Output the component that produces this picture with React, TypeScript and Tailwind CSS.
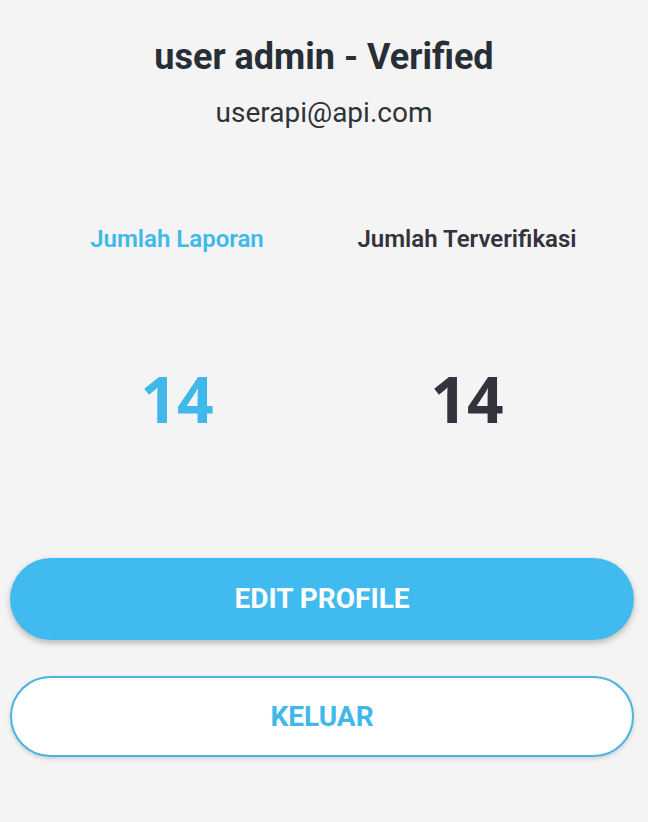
export default function App() {
  return (
    <div className="min-h-screen w-full bg-[#f4f4f4] font-['Roboto',sans-serif] flex flex-col">
      <div className="flex flex-col items-center pt-[35px]">
        <h1 className="text-[36px] leading-[44px] font-bold text-[#272f36]">user admin - Verified</h1>
        <p className="mt-[16px] text-[28px] leading-[36px] text-[#2d3338]">userapi@api.com</p>
      </div>

      <div className="grid grid-cols-2 pl-[32px] pr-[36px] mt-[92px]">
        <div className="flex flex-col items-center">
          <span className="text-[24px] leading-[32px] font-semibold text-[#41b8ea]">Jumlah Laporan</span>
          <span className="mt-[104px] text-[64px] leading-[80px] font-bold font-['Open_Sans',sans-serif] text-[#41b8ea]">14</span>
        </div>
        <div className="flex flex-col items-center">
          <span className="text-[24px] leading-[32px] font-semibold text-[#33323d]">Jumlah Terverifikasi</span>
          <span className="mt-[104px] text-[64px] leading-[80px] font-bold font-['Open_Sans',sans-serif] text-[#33323d]">14</span>
        </div>
      </div>

      <div className="flex flex-col gap-[36px] pl-[10px] pr-[14px] mt-[119px]">
        <button className="h-[82px] w-full rounded-full bg-[#41bbef] text-white text-[28px] font-bold shadow-[0_3px_6px_rgba(0,0,0,0.25)]">
          EDIT PROFILE
        </button>
        <button className="h-[81px] w-full rounded-full bg-white border-2 border-[#4ab4e3] text-[#41b8ea] text-[28px] font-bold shadow-[0_2px_4px_rgba(0,0,0,0.15)]">
          KELUAR
        </button>
      </div>
    </div>
  );
}
